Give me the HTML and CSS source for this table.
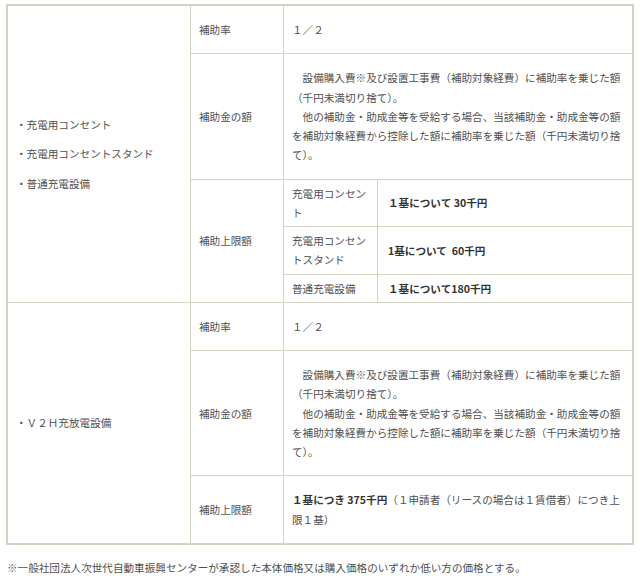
FILE: index.html
```html
<!DOCTYPE html>
<html lang="ja">
<head>
<meta charset="utf-8">
<title>補助金</title>
<link rel="stylesheet" href="styles.css">
</head>
<body>
<div class="page">
  <table class="subsidy">
    <colgroup><col class="c-item"><col class="c-label"><col class="c-body"></colgroup>
    <tbody>
      <tr>
        <td rowspan="3" class="item">
          <p>・充電用コンセント</p>
          <p>・充電用コンセントスタンド</p>
          <p>・普通充電設備</p>
        </td>
        <td class="label">補助率</td>
        <td class="body">１／２</td>
      </tr>
      <tr>
        <td class="label">補助金の額</td>
        <td class="body">
          <p class="para">　設備購入費※及び設置工事費（補助対象経費）に補助率を乗じた額（千円未満切り捨て）。</p>
          <p class="para">　他の補助金・助成金等を受給する場合、当該補助金・助成金等の額を補助対象経費から控除した額に補助率を乗じた額（千円未満切り捨て）。</p>
        </td>
      </tr>
      <tr class="group-end">
        <td class="label">補助上限額</td>
        <td class="nest-cell">
          <table class="nested">
            <colgroup><col class="n-label"><col class="n-value"></colgroup>
            <tbody>
              <tr><td class="n-name">充電用コンセント</td><td class="n-amount"><strong>１基について 30千円</strong></td></tr>
              <tr><td class="n-name">充電用コンセントスタンド</td><td class="n-amount"><strong>1基について&nbsp; 60千円</strong></td></tr>
              <tr><td class="n-name">普通充電設備</td><td class="n-amount"><strong>１基について180千円</strong></td></tr>
            </tbody>
          </table>
        </td>
      </tr>
      <tr>
        <td rowspan="3" class="item last-row">
          <p>・Ｖ２Ｈ充放電設備</p>
        </td>
        <td class="label">補助率</td>
        <td class="body">１／２</td>
      </tr>
      <tr>
        <td class="label">補助金の額</td>
        <td class="body">
          <p class="para">　設備購入費※及び設置工事費（補助対象経費）に補助率を乗じた額（千円未満切り捨て）。</p>
          <p class="para">　他の補助金・助成金等を受給する場合、当該補助金・助成金等の額を補助対象経費から控除した額に補助率を乗じた額（千円未満切り捨て）。</p>
        </td>
      </tr>
      <tr>
        <td class="label last-row">補助上限額</td>
        <td class="body last-row"><p class="para"><strong>１基につき 375千円</strong>（１申請者（リースの場合は１賃借者）につき上限１基）</p></td>
      </tr>
    </tbody>
  </table>
  <p class="note">※一般社団法人次世代自動車振興センターが承認した本体価格又は購入価格のいずれか低い方の価格とする。</p>
</div>
</body>
</html>
```
FILE: styles.css
```css
html, body {
  margin: 0;
  padding: 0;
  background: #ffffff;
}

.page {
  padding: 4px 6px;
  font-family: "Noto Sans CJK JP", "Noto Sans", sans-serif;
  font-size: 10.6px;
  line-height: 19.25px;
  color: #4f4f4f;
}

.subsidy {
  width: 628px;
  table-layout: fixed;
  border-collapse: separate;
  border-spacing: 0;
  border: 2px solid #d5d3c3;
}

.c-item { width: 183px; }
.c-label { width: 93px; }
.c-body { width: 348px; }

.subsidy > tbody > tr > td {
  vertical-align: middle;
  border-right: 1px solid #d5d3c3;
  border-bottom: 1px solid #d5d3c3;
  padding: 14px 8px;
}

.subsidy > tbody > tr > td.body,
.subsidy > tbody > tr > td.nest-cell {
  border-right: none;
}

.subsidy > tbody > tr > td.last-row {
  border-bottom: none;
}

.subsidy > tbody > tr > td.nest-cell {
  padding: 0;
}

.item p {
  margin: 0;
}

.item p + p {
  margin-top: 10.3px;
}

.para {
  margin: 0;
}

strong {
  font-weight: bold;
  color: #333333;
}

.nested {
  width: 100%;
  table-layout: fixed;
  border-collapse: separate;
  border-spacing: 0;
}

.n-label { width: 94px; }

.nested td {
  vertical-align: middle;
  padding: 4px 8px;
  border-bottom: 1px solid #d5d3c3;
}

.nested tr:last-child td {
  border-bottom: none;
}

.nested td.n-name {
  border-right: 1px solid #d5d3c3;
}

.nested td.n-amount {
  padding-left: 10px;
}

.note {
  margin: 13px 0 0 1px;
}
```
